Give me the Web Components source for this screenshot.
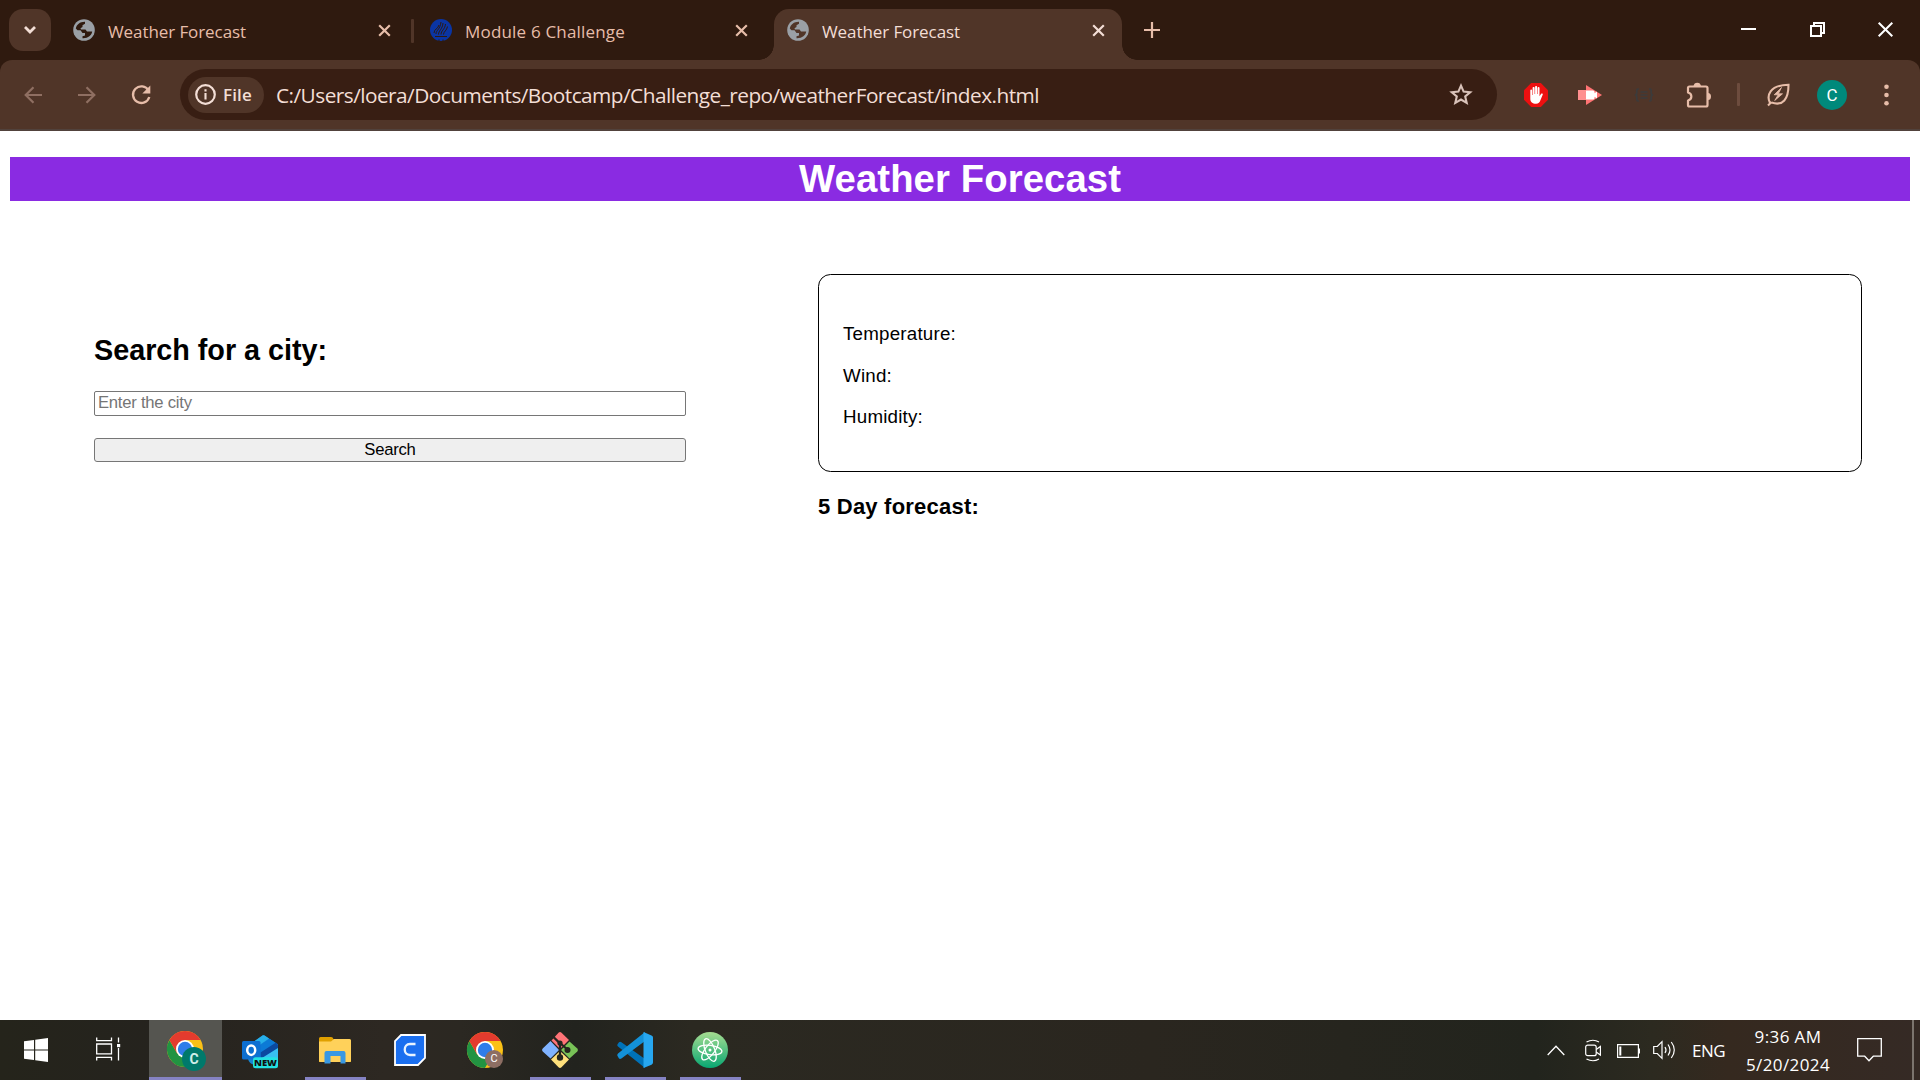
<!DOCTYPE html>
<html lang="en">
<head>
<meta charset="utf-8">
<title>Weather Forecast</title>
<style>
html,body{margin:0;height:100%;overflow:hidden;background:#fff}
body{font-family:"Open Sans","Noto Sans",sans-serif}
</style>
</head>
<body>
<desktop-screen></desktop-screen>
<script>
const ICONS = {
  down: [14,10,'<path d="M2 2l5 5 5-5" fill="none" stroke="#f3ded6" stroke-width="2.8"/>'],
  globe: [22,22,'<circle cx="11" cy="11" r="10.800" fill="#9aa0a6"/><path d="M2.800 9.500C3.500 5.500 7 2.600 12 2.700V4.800L9.500 6.200V8L7.500 9.200 8 10.500H12.500L14 12.500H19.200C18.500 16.500 15 19.500 9.500 19.200V17.200L12 16.500V14H9.500L7.500 11.200H4.500z" fill="var(--globe-bg,#2f1a0f)"/>'],
  flame: [22,22,'<circle cx="11" cy="11" r="11" fill="#0a35a4"/><g fill="none" stroke="#2f1a0f" stroke-width="1"><path d="M4 14c0-4 4-4 5-8M6 15c0-4 4-4 5-12M8.500 15.500c0-4 4-5 4.500-11.500M11 15.500c0-4 4-5 4.500-10.500M13.500 15.500c0-3 3.500-4 4-8"/><path d="M5 17.500h12M9 20.500V22M13 20.500V22"/></g>'],
  x: [13,13,'<path d="M1.200 1.200l10.600 10.600M11.800 1.200L1.200 11.800" fill="none" stroke="currentColor" stroke-width="2.200"/>'],
  plus: [16,16,'<path d="M8 0v16M0 8h16" stroke="#e7bda9" stroke-width="2.200"/>'],
  min: [15,16,'<path d="M0 7h15" stroke="#fff" stroke-width="2"/>'],
  restore: [15,15,'<path d="M1 4h10v10H1zM4 4V1h10v10h-3" fill="none" stroke="#fff" stroke-width="2"/>'],
  close: [15,15,'<path d="M.7.7l13.600 13.600M14.300.7L.7 14.300" stroke="#fff" stroke-width="2"/>'],
  back: [18,18,'<path d="M18 9H2M9.500 1.200L1.700 9l7.800 7.800" fill="none" stroke="#8f6f62" stroke-width="2.200"/>'],
  fwd: [18,18,'<path d="M0 9h16M8.500 1.200L16.300 9l-7.800 7.800" fill="none" stroke="#8f6f62" stroke-width="2.200"/>'],
  reload: [20,20,'<path d="M17.500 5.500A8.300 8.300 0 1 0 18.300 12" fill="none" stroke="#e7bda9" stroke-width="2.300"/><path d="M19.300.5v8h-8z" fill="#e7bda9"/>'],
  info: [21,21,'<circle cx="10.500" cy="10.500" r="9.300" fill="none" stroke="#f3ded6" stroke-width="2.200"/><path d="M10.500 9v6.500M10.500 5.300v2.200" stroke="#f3ded6" stroke-width="2.100"/>'],
  star: [24,23,'<path d="M12 2.600l2.600 6 6.600.6-5 4.300 1.500 6.400-5.700-3.400-5.700 3.400 1.500-6.400-5-4.300 6.600-.6z" fill="none" stroke="#d9c2b9" stroke-width="2.100"/>'],
  abp: [24,24,'<path d="M7.200 0h9.600L24 7.200v9.600L16.800 24H7.200L0 16.800V7.200z" fill="#ed1010"/><path d="M6.300 7.200c0-1 1.800-1 1.800 0V12h.5V4.700c0-1.100 2-1.100 2 0V11h.5V3.800c0-1.100 2-1.100 2 0V11h.5V4.900c0-1.100 1.900-1.100 1.900 0v8.300l1.500-2.200c.7-.9 2.200-.3 1.700.8L16.500 17c-.9 2.500-2 3.700-4.500 3.700-3.500 0-5.700-1.800-5.700-5z" fill="#fff"/>'],
  cast: [24,20,'<path d="M0 5h8v10H0z" fill="#ff8f8f"/><path d="M8 0l16 10L8 20z" fill="#ff7474"/><path d="M8 5.500h7q1.500 0 1.500 1.500v1.200l2.500-1.700v7l-2.500-1.700V13q0 1.500-1.500 1.500H8z" fill="#fff"/>'],
  json: [20,14,'<path d="M5 1H4Q2.800 1 2.800 2.500V5Q2.800 7 .8 7q2 0 2 2v2.500Q2.800 13 4 13h1M15 1h1q1.200 0 1.200 1.500V5q0 2 2 2-2 0-2 2v2.500Q17.200 13 16 13h-1M6.500 4h7M6.500 7h7M6.500 10h7" fill="none" stroke="#3c3b3b" stroke-width="1.700"/>'],
  puzzle: [25,26,'<path d="M2 6Q2 4.500 3.500 4.500H20q1.500 0 1.500 1.500v17q0 1.500-1.500 1.500H3.500Q2 24.500 2 23v-4.500c4.500-1.300 4.500-6.700 0-8z" fill="none" stroke="#e7bda9" stroke-width="2.200" stroke-linejoin="round"/><path d="M7.500 4a3.800 4 0 0 1 7.500 0zM22 11a3 3.500 0 0 1 0 7z" fill="#e7bda9"/>'],
  leaf: [23,23,'<path d="M3 20C-.5 13 2 2 21.500 1.800 21.500 16 16 23.500 4.500 19.500M1 22.500l3.500-3.500" fill="none" stroke="#e7bda9" stroke-width="2.100"/><path d="M14.500 4.500l-7.300 7.300h4l-3.500 5.700 7.800-6.700h-4.200z" fill="#e7bda9" stroke="#e7bda9" stroke-width=".8"/>'],
  dots: [5,22,'<g fill="#e7bda9"><circle cx="2.500" cy="2.700" r="2.300"/><circle cx="2.500" cy="11" r="2.300"/><circle cx="2.500" cy="19.300" r="2.300"/></g>'],
  start: [24,24,'<path d="M0 3.300L10 2v9.400H0zM11.200 1.800L24 0v11.400H11.200zM0 12.600h10V22L0 20.700zM11.200 12.600H24V24l-12.800-1.800z" fill="#fff"/>'],
  task: [25,24,'<path d="M.7.500v3.200h14.800V.5M.7 7h14.800v9.800H.7zM.7 23.500v-3.200h14.800v3.200M22.500.5v5M22.500 11v12.500" fill="none" stroke="#fff" stroke-width="1.300"/><path d="M21 7h3.200v3.200H21z" fill="#fff"/>'],
  chrome: [40,40,'<circle cx="18" cy="18" r="18" fill="#fbc116"/><path d="M2.400 9A18 18 0 0 0 18 36l7.800-13.500L10.200 22.500z" fill="#229342"/><path d="M2.400 9A18 18 0 0 1 33.600 9H18l-7.800 13.500z" fill="#e33b2e"/><circle cx="18" cy="18" r="9" fill="#fff"/><circle cx="18" cy="18" r="7.200" fill="#2f7de9"/>'],
  outlook: [36,33,'<path d="M6 11L20.500.4Q21.500 0 22.500.6L36 9.500v14q0 6-6 6H13q-6 0-7-6z" fill="#1686d4"/><path d="M12 6.500L20.500.4Q21.500 0 22.500.6L27 3.500 16 11z" fill="#27b0ea"/><path d="M17 11l10.500-7.200L36 9.500 18.500 20.500z" fill="#0c7ad6"/><path d="M18.500 17.500L34 7.500l2 2v4L21 23h-2.500z" fill="#0b49a0"/><path d="M20 23l16-10v12H20z" fill="#38c0f2"/><rect y="6" width="18.500" height="18.500" rx="1.500" fill="#0d6fd1"/><ellipse cx="9.200" cy="15.200" rx="4" ry="4.700" fill="none" stroke="#fff" stroke-width="2.500"/><rect x="11" y="22.200" width="25" height="11" rx="2.500" fill="#22e2e2"/>'],
  folder: [32,27,'<path d="M0 1.500Q0 0 1.500 0H12q2 0 2.500 2.200H30q2 0 2 1.800v21H0z" fill="#e0a000"/><path d="M0 4.500h12l3-2.500h15.500Q32 2 32 3.500v20q0 1.500-1.500 1.500h-29Q0 25 0 23.500z" fill="#ffd15a"/><path d="M5.500 26.500V16q0-2 2-2h17q2 0 2 2v10.500h-5V19h-10v7.500z" fill="#3998e2"/>'],
  cbox: [32,32,'<path d="M7 1h24v23l-7 7H1V7z" fill="#1a6ff0" stroke="#fff" stroke-width="1.800"/><path d="M21.500 10h-5.500c-7 0-7 11 0 11h5.500" fill="none" stroke="#e8f3ff" stroke-width="2.300"/>'],
  git: [36,36,'<path d="M16.500 .7q1.500-1.300 3 0L27 8l-9 9-8.500-8.500z" fill="#ff7377"/><path d="M.7 16.500L8.500 9l8.500 9-8.500 8.500-7.800-7q-1.400-1.500 0-3z" fill="#80b3ff"/><path d="M27.500 9.500l7.800 7q1.400 1.500 0 3l-7.800 7L19 18z" fill="#78c257"/><path d="M18 19l9 8.500-7.500 7.800q-1.500 1.400-3 0L9 27.500z" fill="#ffe07c"/><path d="M11 4.500l7 7v14M18 11l8 7" stroke="#24251f" stroke-width="2.300" fill="none"/><g fill="#24251f"><circle cx="18" cy="11" r="2.600"/><circle cx="18" cy="25.500" r="3.200"/><circle cx="25.500" cy="18" r="3"/></g>'],
  code: [36,36,'<path d="M2 10.300q1-.9 2.400-.1L28 27v9L1 14.500q-1.500-1.300-.3-2.600z" fill="#0072b8"/><path d="M2 26.500q1 .8 2.400 0L28 9V0L1 21.500q-1.500 1.500-.3 2.700z" fill="#1391d8"/><path d="M26.500 0l8 3.400Q36 4 36 5.500v25q0 1.500-1.500 2.200l-8 3.300z" fill="#27a7f0"/>'],
  atom: [36,36,'<defs><linearGradient id="a" x2="0" y2="1"><stop stop-color="#a6dc91"/><stop offset="1" stop-color="#08a772"/></linearGradient></defs><circle cx="18" cy="18" r="18" fill="url(#a)"/><g fill="none" stroke="#fff" stroke-width="1.300"><ellipse cx="18" cy="18" rx="12" ry="4.700" transform="rotate(8 18 18)"/><ellipse cx="18" cy="18" rx="12" ry="4.700" transform="rotate(68 18 18)"/><ellipse cx="18" cy="18" rx="12" ry="4.700" transform="rotate(-52 18 18)"/></g><circle cx="18" cy="18" r="1.500" fill="#fff"/>'],
  up: [18,11,'<path d="M.7 10L9 1.200 17.300 10" fill="none" stroke="#fff" stroke-width="1.300"/>'],
  meet: [17,23,'<path d="M1.500 3Q8 -.5 14 3M1.500 20q6.500 3.500 12.500 0" fill="none" stroke="#fff" stroke-width="1.200"/><rect x=".7" y="6.200" width="10.500" height="10.500" rx="2" fill="none" stroke="#fff" stroke-width="1.200"/><path d="M11.200 10.500l4.200-3v8.500l-4.200-3" fill="none" stroke="#fff" stroke-width="1.200"/>'],
  battery: [23,14,'<path d="M.6.600h20.800v12.800H.6z" fill="none" stroke="#fff" stroke-width="1.200"/><path d="M2.300 2.500H4.300v9h-2zM21.700 4.500H23v5h-1.300z" fill="#fff"/>'],
  volume: [23,20,'<path d="M.7 6.500h3.600L9 1.700v16.600l-4.700-4.800H.7z" fill="none" stroke="#fff" stroke-width="1.200"/><path d="M12 7q2 3 0 6M15 4.500q4 5.500 0 11M18.300 2q6 8 0 16" fill="none" stroke="#fff" stroke-width="1.200"/>'],
  note: [25,24,'<path d="M.7.700h23.600v17.500h-8L12 22.700l-4.300-4.500h-7z" fill="none" stroke="#fff" stroke-width="1.300"/>']
};

class UiIcon extends HTMLElement {
  connectedCallback() {
    const [w, h, body] = ICONS[this.getAttribute('name')];
    this.attachShadow({mode:'open'}).innerHTML =
      `<style>:host{display:block;flex:none;width:${w}px;height:${h}px}svg{display:block;overflow:visible}</style>
       <svg width="${w}" height="${h}" viewBox="0 0 ${w} ${h}">${body}</svg>`;
  }
}
customElements.define('ui-icon', UiIcon);

/* One line of text, spaced so that it spans the given width. */
class FitText extends HTMLElement {
  connectedCallback() {
    this.attachShadow({mode:'open'}).innerHTML =
      '<style>:host{display:inline-block;white-space:nowrap;flex:none}</style><span><slot></slot></span>';
    const span = this.shadowRoot.querySelector('span');
    const target = +this.getAttribute('w');
    const gap = (target - span.getBoundingClientRect().width) / this.textContent.length;
    span.style.letterSpacing = gap.toFixed(3) + 'px';
    this.style.width = target + 'px';
  }
}
customElements.define('fit-text', FitText);

class BrowserTab extends HTMLElement {
  connectedCallback() {
    this.attachShadow({mode:'open'}).innerHTML = `<style>
      :host{display:flex;position:relative;box-sizing:border-box;width:348px;height:51px;padding:0 17px 9px 13px;align-items:center;color:#e7bda9;font-size:17px;line-height:24px;flex:none}
      .title{margin:3px auto 0 13px;display:block}
      :host([active]){background:#503528;border-radius:15px 15px 0 0;color:#f3ded6;--globe-bg:#503528}
      :host([active])::before,:host([active])::after{content:"";position:absolute;bottom:0;width:15px;height:15px}
      :host([active])::before{left:-15px;background:radial-gradient(circle at 0 0,transparent 14.500px,#503528 15px)}
      :host([active])::after{right:-15px;background:radial-gradient(circle at 100% 0,transparent 14.500px,#503528 15px)}
      </style><ui-icon name="${this.getAttribute('icon')}"></ui-icon><div class="title"><slot></slot></div><ui-icon name="x"></ui-icon>`;
  }
}
customElements.define('browser-tab', BrowserTab);

class TabStrip extends HTMLElement {
  connectedCallback() {
    this.attachShadow({mode:'open'}).innerHTML = `<style>
      :host{display:flex;height:60px;background:#2f1a0f;align-items:flex-start;padding-top:9px;box-sizing:border-box}
      .search{width:42px;height:42px;margin:0 9px;border-radius:14px;background:#503528;display:grid;place-items:center}
      .sep{width:3px;height:24px;margin:10px 3px 0;background:#503528;border-radius:1px}
      .gap{width:9px}
      .new{margin:13px 0 0 22px}
      .win{margin-left:auto;display:flex;width:206px;height:41px;align-items:center}
      .win div{width:69px;display:grid;place-items:center}
      </style>
      <div class="search"><ui-icon name="down"></ui-icon></div>
      <browser-tab icon="globe"><fit-text w="138">Weather Forecast</fit-text></browser-tab><div class="sep"></div>
      <browser-tab icon="flame"><fit-text w="160">Module 6 Challenge</fit-text></browser-tab><div class="gap"></div>
      <browser-tab icon="globe" active><fit-text w="138">Weather Forecast</fit-text></browser-tab>
      <ui-icon class="new" name="plus"></ui-icon>
      <div class="win"><div><ui-icon name="min"></ui-icon></div><div><ui-icon name="restore"></ui-icon></div><div><ui-icon name="close"></ui-icon></div></div>`;
  }
}
customElements.define('tab-strip', TabStrip);

class ToolBar extends HTMLElement {
  connectedCallback() {
    const b = n => `<div class="b"><ui-icon name="${n}"></ui-icon></div>`;
    this.attachShadow({mode:'open'}).innerHTML = `<style>
      :host{display:block;background:#2f1a0f}
      .bar{display:flex;height:71px;box-sizing:border-box;padding:0 7px 0 6px;align-items:center;background:#503528;border-radius:12px 12px 0 0;border-bottom:2px solid #51423c}
      .b{width:54px;display:grid;place-items:center;flex:none}
      .url{display:flex;flex:1;align-items:center;height:51px;box-sizing:border-box;margin:0 12px;border-radius:26px;background:#381e13;padding:0 24px 0 8px;color:#f3ded6;font-size:20.800px;line-height:30px}
      .chip{display:flex;align-items:center;width:76px;height:36px;box-sizing:border-box;padding-left:7px;gap:7px;border-radius:18px;background:#503528;font-size:17px;font-weight:600;margin-right:12px}
      .chip fit-text{margin-top:1px}
      .url>ui-icon{margin-left:auto}
      .sep{width:26px;display:grid;place-items:center}.sep i{width:3px;height:23px;background:#6d4c3e;border-radius:1px}
      .av{width:30px;height:30px;border-radius:50%;background:#00897b;color:#fff;font:17px/31px Roboto,sans-serif;text-align:center}
      </style><div class="bar">${b('back')}${b('fwd')}${b('reload')}
      <div class="url"><div class="chip"><ui-icon name="info"></ui-icon><fit-text w="29">File</fit-text></div>
      <fit-text w="763">C:/Users/loera/Documents/Bootcamp/Challenge_repo/weatherForecast/index.html</fit-text><ui-icon name="star"></ui-icon></div>
      ${b('abp')}${b('cast')}${b('json')}${b('puzzle')}<div class="sep"><i></i></div>${b('leaf')}
      <div class="b"><div class="av">C</div></div>${b('dots')}</div>`;
  }
}
customElements.define('tool-bar', ToolBar);

class WeatherPage extends HTMLElement {
  connectedCallback() {
    this.attachShadow({mode:'open'}).innerHTML = `<style>
      :host{display:block;flex:1;background:#fff;color:#000;padding:26px 10px 0;font-family:"Liberation Sans",Arial,sans-serif}
      h1,h2,h3,p{margin:0}
      h1{height:44px;background:#8a2be2;color:#fff;text-align:center;font-size:38.300px;line-height:43px}
      main{display:flex;padding:73px 48px 0 84px;align-items:flex-start}
      form{width:592px;display:flex;flex-direction:column;padding-top:59px;margin-right:132px}
      h2{font-size:28.800px;line-height:34px;height:58px}
      input,button{display:block;width:100%;box-sizing:border-box;border:1px solid #767676;border-radius:2px;font:16.670px/19px "Liberation Sans",Arial,sans-serif;letter-spacing:-.25px;margin:0}
      input{height:25px;padding:0 3px 2px;margin-bottom:22px}
      input::placeholder{color:#757575}
      button{height:24px;padding:0 0 2px;background:#efefef;color:#000;border-radius:3px}
      section{flex:1}
      .card{height:198px;box-sizing:border-box;border:1.250px solid #000;border-radius:12.500px;padding:48px 24px 0;font-size:18.750px;line-height:21px}
      .card p{margin-bottom:20.600px}
      h3{font-size:22px;line-height:26px;margin-top:22px}
      </style>
      <h1><fit-text w="322">Weather Forecast</fit-text></h1>
      <main><form><h2><fit-text w="233">Search for a city:</fit-text></h2><input placeholder="Enter the city"><button type="button">Search</button></form>
      <section><div class="card"><p><fit-text w="113">Temperature:</fit-text></p><p><fit-text w="49">Wind:</fit-text></p><p><fit-text w="80">Humidity:</fit-text></p></div>
      <h3><fit-text w="161">5 Day forecast:</fit-text></h3></section></main>`;
  }
}
customElements.define('weather-page', WeatherPage);

class TaskButton extends HTMLElement {
  connectedCallback() {
    this.attachShadow({mode:'open'}).innerHTML = `<style>
      :host{display:grid;place-items:center;position:relative;box-sizing:border-box;width:61px;height:60px;margin-right:14px;padding-right:2px;flex:none}
      :host([open]){border-bottom:3px solid #8583c3;padding-top:3px}
      :host([active]){width:73px;margin-right:8px;background:#555550}
      </style><slot></slot>`;
  }
}
customElements.define('task-button', TaskButton);

class TaskBar extends HTMLElement {
  connectedCallback() {
    this.attachShadow({mode:'open'}).innerHTML = `<style>
      :host{display:flex;height:60px;align-items:center;color:#fff;background:linear-gradient(90deg,#25241b 0,#25231e 8%,#2d2822 20%,#2b2822 24%,#22231e 30%,#2b2921 36%,#2a261f 60%,#22241d 80%,#2c2a20 86%,#35291f 90%,#352a25 100%)}
      .start{margin-left:24px}.task{margin:-2px 28px 0 48px}
      .badge{position:absolute;border-radius:50%;text-align:center;font-family:Roboto,sans-serif}
      .b1{left:33px;top:27px;width:24px;height:24px;background:#00796b;color:#cfeee9;font-size:14px;line-height:24px;font-weight:700}
      .b2{left:30px;top:30px;width:18px;height:18px;background:#8d6e63;color:#fff;font-size:11px;line-height:18px}
      .new{position:absolute;left:23px;top:37px;width:25px;font:800 9.500px/11px "Open Sans",sans-serif;color:#111;text-align:center}
      .chrome{margin:2px 0 0 4px}
      .tray{display:flex;align-items:center;margin-left:auto;height:60px}
      .lang{font-size:17px;line-height:24px;margin:2px 21px 0 16px}
      .clock{width:84px;text-align:center;font-size:17px;line-height:28px;margin:2px 27px 0 0}
      .clock fit-text{display:block;margin:0 auto}
      .end{width:2px;height:60px;background:#7b746e;margin:0 6px 0 30px}
      </style>
      <ui-icon class="start" name="start"></ui-icon><ui-icon class="task" name="task"></ui-icon>
      <task-button open active><ui-icon class="chrome" name="chrome"></ui-icon><div class="badge b1">C</div></task-button>
      <task-button><ui-icon name="outlook" style="margin-top:3px"></ui-icon><div class="new">NEW</div></task-button>
      <task-button open><ui-icon name="folder"></ui-icon></task-button>
      <task-button><ui-icon name="cbox"></ui-icon></task-button>
      <task-button><ui-icon class="chrome" name="chrome" style="margin-top:4px"></ui-icon><div class="badge b2">C</div></task-button>
      <task-button open><ui-icon name="git"></ui-icon></task-button>
      <task-button open><ui-icon name="code"></ui-icon></task-button>
      <task-button open><ui-icon name="atom"></ui-icon></task-button>
      <div class="tray"><ui-icon name="up" style="margin-right:20px"></ui-icon><ui-icon name="meet" style="margin-right:15px"></ui-icon>
      <ui-icon name="battery" style="margin:1px 13px 0 0"></ui-icon><ui-icon name="volume"></ui-icon>
      <div class="lang"><fit-text w="33">ENG</fit-text></div>
      <div class="clock"><fit-text w="67">9:36 AM</fit-text><fit-text w="84">5/20/2024</fit-text></div>
      <ui-icon name="note"></ui-icon><div class="end"></div></div>`;
  }
}
customElements.define('task-bar', TaskBar);

class DesktopScreen extends HTMLElement {
  connectedCallback() {
    this.attachShadow({mode:'open'}).innerHTML = `<style>:host{display:flex;flex-direction:column;width:1920px;height:1080px;overflow:hidden}</style>
      <tab-strip></tab-strip><tool-bar></tool-bar><weather-page></weather-page><task-bar></task-bar>`;
  }
}
customElements.define('desktop-screen', DesktopScreen);
</script>
</body>
</html>
